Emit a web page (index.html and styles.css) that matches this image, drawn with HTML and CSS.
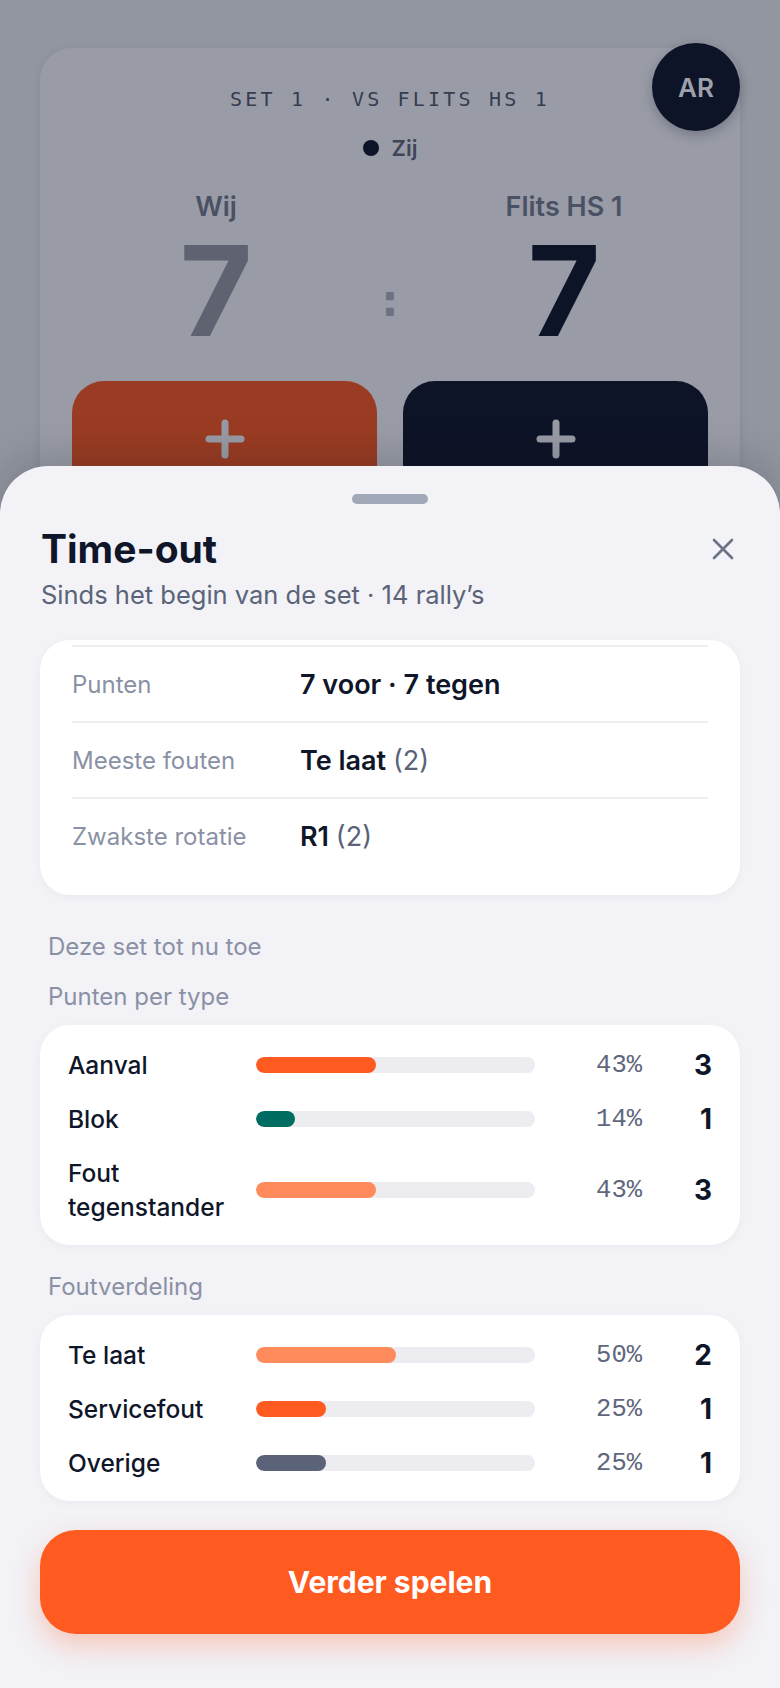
FILE: index.html
```html
<!DOCTYPE html>
<html>
<head>
    <title>Time-out</title>
    <link rel="stylesheet" href="styles.css">
</head>
<body>
    <div class="screen">
        <div class="match-card">
            <div class="match-title">SET 1 · VS FLITS HS 1</div>
            <div class="serve"><span class="serve-dot"></span>Zij</div>

            <div class="score">
                <div class="team">
                    <div class="team-name">Wij</div>
                    <div class="team-score us">7</div>
                </div>
                <div class="score-sep">:</div>
                <div class="team">
                    <div class="team-name">Flits HS 1</div>
                    <div class="team-score them">7</div>
                </div>
            </div>

            <div class="point-buttons">
                <button class="point-btn us">
                    <svg width="40" height="40" viewBox="0 0 40 40"><path d="M20 4v32M4 20h32" /></svg>
                </button>
                <button class="point-btn them">
                    <svg width="40" height="40" viewBox="0 0 40 40"><path d="M20 4v32M4 20h32" /></svg>
                </button>
            </div>
        </div>

        <div class="avatar">AR</div>
    </div>

    <div class="sheet">
        <div class="handle"></div>

        <div class="sheet-head">
            <h2>Time-out</h2>
            <button class="close-btn">
                <svg width="22" height="22" viewBox="0 0 22 22"><path d="M2 2l18 18M20 2L2 20" /></svg>
            </button>
        </div>
        <p class="subtitle">Sinds het begin van de set · 14 rally’s</p>

        <div class="summary">
            <div class="summary-row">
                <span class="summary-label">Punten</span>
                <span class="summary-value">7 voor · 7 tegen</span>
            </div>
            <div class="summary-row">
                <span class="summary-label">Meeste fouten</span>
                <span class="summary-value">Te laat <span class="muted">(2)</span></span>
            </div>
            <div class="summary-row">
                <span class="summary-label">Zwakste rotatie</span>
                <span class="summary-value">R1 <span class="muted">(2)</span></span>
            </div>
        </div>

        <div class="section-label first">Deze set tot nu toe</div>
        <div class="section-label">Punten per type</div>
        <div class="stat-card">
            <div class="stat-row">
                <span class="stat-label">Aanval</span>
                <div class="bar"><div class="bar-fill orange" style="width: 43%"></div></div>
                <span class="stat-pct">43%</span>
                <span class="stat-count">3</span>
            </div>
            <div class="stat-row">
                <span class="stat-label">Blok</span>
                <div class="bar"><div class="bar-fill teal" style="width: 14%"></div></div>
                <span class="stat-pct">14%</span>
                <span class="stat-count">1</span>
            </div>
            <div class="stat-row">
                <span class="stat-label">Fout tegenstander</span>
                <div class="bar"><div class="bar-fill peach" style="width: 43%"></div></div>
                <span class="stat-pct">43%</span>
                <span class="stat-count">3</span>
            </div>
        </div>

        <div class="section-label spaced">Foutverdeling</div>
        <div class="stat-card">
            <div class="stat-row">
                <span class="stat-label">Te laat</span>
                <div class="bar"><div class="bar-fill peach" style="width: 50%"></div></div>
                <span class="stat-pct">50%</span>
                <span class="stat-count">2</span>
            </div>
            <div class="stat-row">
                <span class="stat-label">Servicefout</span>
                <div class="bar"><div class="bar-fill orange" style="width: 25%"></div></div>
                <span class="stat-pct">25%</span>
                <span class="stat-count">1</span>
            </div>
            <div class="stat-row">
                <span class="stat-label">Overige</span>
                <div class="bar"><div class="bar-fill slate" style="width: 25%"></div></div>
                <span class="stat-pct">25%</span>
                <span class="stat-count">1</span>
            </div>
        </div>

        <button class="continue-btn">Verder spelen</button>
    </div>
</body>
</html>
```

FILE: styles.css
```css
body {
    margin: 0;
    height: 1688px;
    overflow: hidden;
    position: relative;
    background-color: #9296a0;
    font-family: Inter, "Noto Sans", sans-serif;
    color: #0f1629;
}

button {
    font-family: inherit;
    border: none;
    padding: 0;
    cursor: pointer;
}

/* dimmed scoreboard behind the sheet */
.screen {
    padding: 48px 40px 0;
}

.match-card {
    background-color: #999ca6;
    border-radius: 32px;
    padding: 37px 32px 0;
    box-shadow: 0 2px 8px rgba(20, 25, 40, 0.08);
}

.match-title {
    font-family: "DejaVu Sans Mono", monospace;
    font-size: 20px;
    line-height: 28px;
    letter-spacing: 3.2px;
    text-align: center;
    color: #353c50;
}

.serve {
    display: flex;
    justify-content: center;
    align-items: center;
    gap: 13px;
    margin-top: 20px;
    font-size: 22px;
    line-height: 30px;
    font-weight: 600;
    color: #3e4559;
}

.serve-dot {
    width: 16px;
    height: 16px;
    border-radius: 50%;
    background-color: #0e1427;
}

.score {
    display: grid;
    grid-template-columns: 1fr 60px 1fr;
    margin-top: 27px;
}

.team {
    display: flex;
    flex-direction: column;
    align-items: center;
}

.team-name {
    font-size: 27px;
    line-height: 34px;
    font-weight: 600;
    color: #4b5164;
}

.team-score {
    margin-top: 4px;
    font-size: 125px;
    line-height: 125px;
    font-weight: 700;
}

.team-score.us {
    color: #5e6271;
}

.team-score.them {
    color: #0e1427;
}

.score-sep {
    align-self: end;
    margin-bottom: 30px;
    text-align: center;
    font-family: "DejaVu Sans Mono", monospace;
    font-weight: 700;
    font-size: 47px;
    line-height: 47px;
    color: #6d7282;
}

.point-buttons {
    display: grid;
    grid-template-columns: 1fr 1fr;
    gap: 26px;
    margin-top: 28px;
}

.point-btn {
    height: 116px;
    border-radius: 32px;
    display: flex;
    justify-content: center;
    align-items: center;
}

.point-btn svg path {
    stroke: #989ba5;
    stroke-width: 7;
    stroke-linecap: round;
}

.point-btn.us {
    background-color: #9a3c23;
}

.point-btn.them {
    background-color: #0e1427;
}

.avatar {
    position: absolute;
    top: 43px;
    left: 652px;
    width: 88px;
    height: 88px;
    border-radius: 50%;
    background-color: #0e1427;
    color: #9ea1ac;
    font-size: 26px;
    font-weight: 600;
    display: flex;
    justify-content: center;
    align-items: center;
    box-shadow: 0 4px 12px rgba(10, 15, 30, 0.25);
}

/* bottom sheet */
.sheet {
    position: absolute;
    top: 466px;
    left: 0;
    right: 0;
    bottom: 0;
    background-color: #f2f2f7;
    border-radius: 48px 48px 0 0;
    padding: 28px 40px 0;
    box-shadow: 0 -8px 40px rgba(10, 15, 30, 0.18);
}

.handle {
    width: 76px;
    height: 10px;
    border-radius: 5px;
    background-color: #a1a9b9;
    margin: 0 auto;
}

.sheet-head {
    display: flex;
    justify-content: space-between;
    align-items: center;
    margin-top: 21px;
}

.sheet-head h2 {
    margin: 0 0 0 1px;
    font-size: 39px;
    line-height: 48px;
    font-weight: 700;
    color: #0f1629;
}

.close-btn {
    width: 34px;
    height: 34px;
    background: none;
    display: flex;
    justify-content: center;
    align-items: center;
}

.close-btn svg path {
    stroke: #6b7385;
    stroke-width: 2.6;
    stroke-linecap: round;
}

.subtitle {
    margin: 6px 0 0 1px;
    font-size: 25.5px;
    line-height: 32px;
    color: #5b6378;
}

.summary {
    margin-top: 29px;
    background-color: #ffffff;
    border-radius: 30px;
    padding: 5px 32px 22px;
    box-shadow: 0 2px 8px rgba(15, 22, 41, 0.04);
}

.summary-row {
    display: grid;
    grid-template-columns: 228px 1fr;
    align-items: center;
    height: 74px;
    border-top: 2px solid #ededf2;
}

.summary-label {
    font-size: 24px;
    color: #8a91a5;
}

.summary-value {
    font-size: 27px;
    font-weight: 600;
    color: #0f1629;
}

.summary-value .muted {
    font-weight: 400;
    color: #5b6378;
}

.section-label {
    margin: 20px 0 0 8px;
    font-size: 24px;
    line-height: 30px;
    color: #8a91a5;
}

.section-label.first {
    margin-top: 37px;
}

.section-label.spaced {
    margin-top: 27px;
}

.stat-card {
    margin-top: 13px;
    background-color: #ffffff;
    border-radius: 30px;
    padding: 23px 28px 21px;
    display: flex;
    flex-direction: column;
    gap: 20px;
    box-shadow: 0 2px 8px rgba(15, 22, 41, 0.04);
}

.stat-row {
    display: grid;
    grid-template-columns: 188px 1fr 107px 70px;
    align-items: center;
}

.stat-label {
    padding-right: 14px;
    font-size: 24.5px;
    line-height: 34px;
    font-weight: 500;
    color: #0f1629;
}

.bar {
    height: 16px;
    border-radius: 8px;
    background-color: #ececf1;
    overflow: hidden;
}

.bar-fill {
    height: 100%;
    border-radius: 8px;
}

.bar-fill.orange {
    background-color: #ff5a1f;
}

.bar-fill.teal {
    background-color: #006d63;
}

.bar-fill.peach {
    background-color: #ff8a5c;
}

.bar-fill.slate {
    background-color: #5b6378;
}

.stat-pct {
    text-align: right;
    font-family: "Liberation Mono", monospace;
    font-size: 25.5px;
    color: #5f677c;
}

.stat-count {
    text-align: right;
    font-size: 28px;
    font-weight: 700;
    color: #0f1629;
}

.continue-btn {
    display: block;
    width: 100%;
    height: 104px;
    margin-top: 29px;
    border-radius: 36px;
    background-color: #ff5a1f;
    color: #ffffff;
    font-size: 30px;
    font-weight: 700;
    box-shadow: 0 12px 28px rgba(255, 90, 31, 0.28);
}
```
